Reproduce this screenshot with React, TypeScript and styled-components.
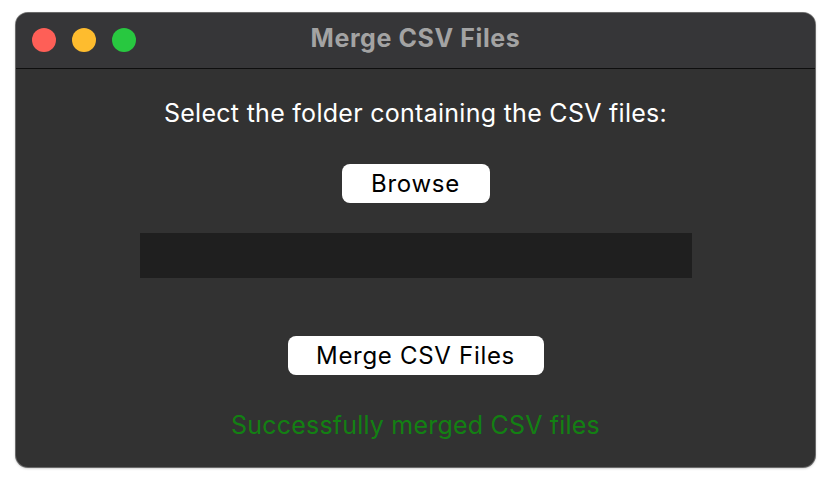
import React from "react";
import styled, { createGlobalStyle } from "styled-components";

const GlobalStyle = createGlobalStyle`
  html, body {
    margin: 0;
    padding: 0;
    background: #ffffff;
  }
  body {
    font-family: Inter, "Liberation Sans", Arial, sans-serif;
  }
`;

const Page = styled.div`
  width: 836px;
  height: 488px;
  padding: 13px 0 0 16px;
  box-sizing: border-box;
`;

const Window = styled.div`
  width: 799px;
  height: 454px;
  border-radius: 12px;
  overflow: hidden;
  background: #323232;
  box-shadow: 0 0 0 1px #6a6a6a, 0 1px 3px rgba(0, 0, 0, 0.35);
  display: flex;
  flex-direction: column;
`;

const TitleBar = styled.div`
  height: 55px;
  background: #363638;
  border-bottom: 1px solid #0e0e0e;
  display: flex;
  align-items: center;
  position: relative;
  flex-shrink: 0;
`;

const Lights = styled.div`
  display: flex;
  gap: 16px;
  padding-left: 16px;
  margin-top: -2px;
`;

const Light = styled.span<{ $color: string }>`
  width: 24px;
  height: 24px;
  border-radius: 50%;
  background: ${(p) => p.$color};
`;

const Title = styled.div`
  position: absolute;
  left: 0;
  right: 0;
  top: 10px;
  text-align: center;
  font-size: 25px;
  line-height: 30px;
  font-weight: 700;
  letter-spacing: 0.6px;
  color: #a3a3a3;
  pointer-events: none;
`;

const Content = styled.div`
  flex: 1;
  display: flex;
  flex-direction: column;
  align-items: center;
  padding-top: 30px;
`;

const Label = styled.div`
  font-size: 25px;
  line-height: 28px;
  letter-spacing: 0.28px;
  color: #ffffff;
`;

const Button = styled.button<{ $width: number; $top: number }>`
  width: ${(p) => p.$width}px;
  height: 39px;
  margin-top: ${(p) => p.$top}px;
  border: none;
  border-radius: 8px;
  background: #ffffff;
  color: #000000;
  font-family: Inter, "Liberation Sans", Arial, sans-serif;
  font-size: 24px;
  letter-spacing: 0.7px;
  padding: 0;
`;

const PathBox = styled.div`
  width: 552px;
  height: 45px;
  margin-top: 30px;
  background: #1f1f1f;
`;

const Status = styled.div`
  margin-top: 35px;
  font-size: 25px;
  line-height: 30px;
  letter-spacing: 0.2px;
  color: #138013;
`;

export default function App() {
  return (
    <>
      <GlobalStyle />
      <Page>
        <Window>
          <TitleBar>
            <Lights>
              <Light $color="#fe5f57" />
              <Light $color="#febc2e" />
              <Light $color="#28c840" />
            </Lights>
            <Title>Merge CSV Files</Title>
          </TitleBar>
          <Content>
            <Label>Select the folder containing the CSV files:</Label>
            <Button $width={148} $top={37}>Browse</Button>
            <PathBox />
            <Button $width={256} $top={58}>Merge CSV Files</Button>
            <Status>Successfully merged CSV files</Status>
          </Content>
        </Window>
      </Page>
    </>
  );
}
